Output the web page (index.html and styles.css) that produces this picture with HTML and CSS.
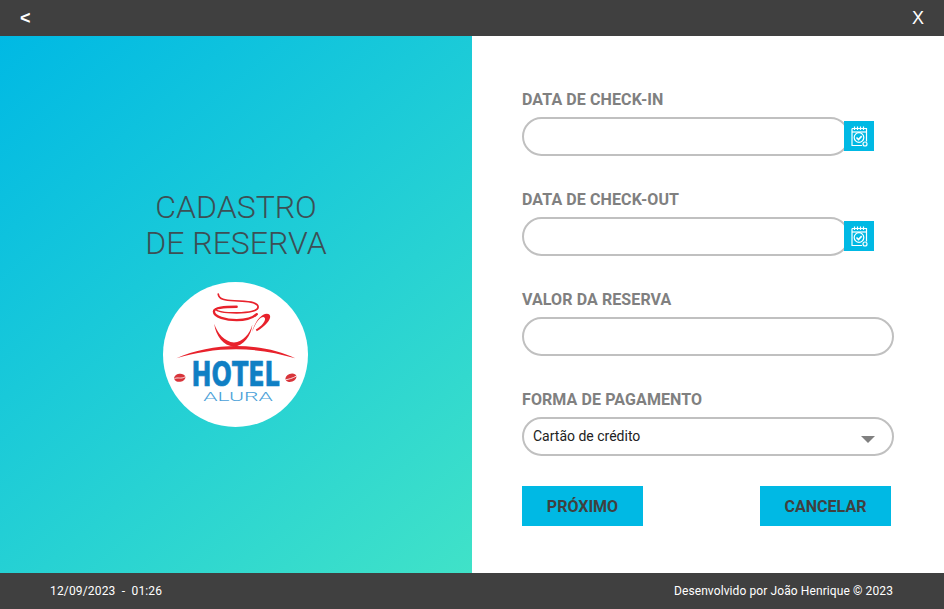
FILE: index.html
```html
<!DOCTYPE html>
<html>
<head>
	<meta charset="UTF-8">
	<title>Cadastro de Reserva</title>
	<link rel="stylesheet" href="styles.css">
</head>

<body>
<svg class="defs">
	<symbol id="calendar" viewBox="0 0 30 30">
		<g fill="none" stroke="#fff" stroke-width="1.200">
			<path d="M8 7.500h14.500v13M8 7.500v17h10"/>
			<path d="M10.500 5.500v3.500M13.500 5.500v3.500M16.500 5.500v3.500M19.500 5.500v3.500"/>
			<path d="M8 11h14.500"/>
			<circle cx="15" cy="16.500" r="4.800"/>
			<path d="M12.500 16.500l2 2l3.200-3.400" stroke-width="1.600"/>
			<circle cx="21" cy="23" r="2"/>
		</g>
	</symbol>
</svg>

<header class="topbar">
	<span class="back">&lt;</span>
	<span class="close">X</span>
</header>

<main class="content">
	<section class="side">
		<h1 class="title">CADASTRO<br>DE RESERVA</h1>
		<svg class="logo" viewBox="40 37 433 433">
			<circle cx="256.500" cy="253.500" r="216.500" fill="#fff"/>
			<g fill="none" stroke="#e8222c" stroke-linecap="round">
				<path d="M205 73c2 16 20 19 48 20c40 1 70 4 71 18c1 12-26 18-64 18c-34 0-60-4-62-11" stroke-width="5"/>
				<path d="M260 111c-36 0-68 2-68 14c0 16 36 26 68 26c24 0 48-6 60-18" stroke-width="7"/>
			</g>
			<path d="M193 162c4 36 28 66 58 68c30-2 52-32 56-66c-8 28-28 52-55 54c-28-2-50-28-59-56z" fill="#e8222c"/>
			<path d="M306 186c8-28 26-54 44-54c18 0 14 26-30 52l-3-5c24-14 34-34 24-37c-12-2-26 20-35 44z" fill="#e8222c"/>
			<path d="M80 265c50-24 120-37 178-37c64 0 130 13 177 37c-56-17-116-27-177-27c-62 0-122 10-178 27z" fill="#e8222c"/>
			<g fill="#d8343a">
				<ellipse cx="90" cy="323" rx="17" ry="12" transform="rotate(-8 90 323)"/>
				<ellipse cx="422" cy="323" rx="17" ry="12" transform="rotate(-20 422 323)"/>
			</g>
			<g stroke="#fff" stroke-width="2.500" fill="none">
				<path d="M74 326c10-6 20 2 32-6"/>
				<path d="M406 329c10-2 20-4 32-11"/>
			</g>
			<text class="hotel" x="125" y="347" textLength="264" lengthAdjust="spacingAndGlyphs">HOTEL</text>
			<text class="alura" x="160" y="393" textLength="208" lengthAdjust="spacingAndGlyphs">ALURA</text>
		</svg>
	</section>

	<form class="form">
		<div class="field">
			<label class="label">DATA DE CHECK-IN</label>
			<div class="date-row">
				<div class="input input-date"></div>
				<span class="date-btn"><svg><use href="#calendar"/></svg></span>
			</div>
		</div>
		<div class="field">
			<label class="label">DATA DE CHECK-OUT</label>
			<div class="date-row">
				<div class="input input-date"></div>
				<span class="date-btn"><svg><use href="#calendar"/></svg></span>
			</div>
		</div>
		<div class="field">
			<label class="label">VALOR DA RESERVA</label>
			<div class="input"></div>
		</div>
		<div class="field">
			<label class="label">FORMA DE PAGAMENTO</label>
			<div class="input select">
				<span>Cartão de crédito</span>
				<i class="arrow"></i>
			</div>
		</div>
		<div class="buttons">
			<button type="button" class="btn btn-next">PRÓXIMO</button>
			<button type="button" class="btn btn-cancel">CANCELAR</button>
		</div>
	</form>
</main>

<footer class="footer">
	<span class="clock">12/09/2023  -  01:26</span>
	<span>Desenvolvido por João Henrique © 2023</span>
</footer>
</body>
</html>
```

FILE: styles.css
```css
* {
	box-sizing: border-box;
}
html, body {
	margin: 0;
	height: 100%;
}
body {
	display: flex;
	flex-direction: column;
	height: 609px;
	overflow: hidden;
	font-family: Roboto, "Liberation Sans", sans-serif;
	background-color: #fff;
}
.defs {
	display: none;
}

.topbar {
	display: flex;
	justify-content: space-between;
	align-items: center;
	flex: 0 0 36px;
	padding: 0 20px;
	background-color: #404040;
	color: #fff;
	font-size: 18px;
}
.back {
	font-family: "Liberation Sans", sans-serif;
	font-weight: bold;
}
.close {
	font-family: "Liberation Sans", sans-serif;
}

.content {
	display: flex;
	flex: 1;
}
.side {
	display: flex;
	flex-direction: column;
	align-items: center;
	width: 472px;
	padding-top: 153px;
	background: linear-gradient(140deg, #00b9e4 0%, #40e2c8 100%);
}
.title {
	margin: 0;
	font-size: 32px;
	font-weight: 300;
	line-height: 36px;
	text-align: center;
	color: #3c4f55;
}
.logo {
	width: 145px;
	height: 145px;
	margin-top: 21px;
	margin-right: 1px;
	overflow: visible;
}
.hotel {
	font-family: "DejaVu Sans", sans-serif;
	font-weight: bold;
	font-size: 100px;
	fill: #0f7fc4;
	stroke: #0f7fc4;
	stroke-width: 2;
}
.alura {
	font-family: Roboto, sans-serif;
	font-size: 38px;
	font-weight: 300;
	fill: #4a9fd8;
}

.form {
	flex: 1;
	padding: 54px 50px 0;
}
.field {
	height: 100px;
}
.field:last-of-type {
	height: 99px;
}
.label {
	display: block;
	height: 27px;
	font-size: 16px;
	font-weight: bold;
	letter-spacing: .1px;
	line-height: 19px;
	color: #808080;
}
.input {
	width: 372px;
	height: 39px;
	border: 2px solid #c0c0c0;
	border-radius: 20px;
	background-color: #fff;
}
.date-row {
	display: flex;
	align-items: flex-start;
}
.input-date {
	width: 328px;
}
.date-btn {
	display: block;
	width: 30px;
	height: 30px;
	margin: 4px 0 0 -6px;
	background-color: #00b9e4;
}
.date-btn svg {
	display: block;
	width: 30px;
	height: 30px;
}
.select {
	display: flex;
	justify-content: space-between;
	align-items: center;
	padding: 0 17px 0 9px;
	font-size: 14px;
	color: #222;
}
.select span {
	margin-top: -2px;
}
.arrow {
	width: 0;
	height: 0;
	margin-top: 5px;
	border-top: 7px solid #808080;
	border-left: 7px solid transparent;
	border-right: 7px solid transparent;
}

.buttons {
	display: flex;
	justify-content: space-between;
	width: 369px;
	margin-top: -4px;
}
.btn {
	height: 40px;
	padding: 0;
	border: 0;
	background-color: #00b9e4;
	color: #404040;
	font-family: Roboto, "Liberation Sans", sans-serif;
	font-size: 16px;
	font-weight: bold;
}
.btn-next {
	width: 121px;
}
.btn-cancel {
	width: 131px;
}

.footer {
	display: flex;
	justify-content: space-between;
	align-items: center;
	flex: 0 0 36px;
	padding: 0 51px 0 50px;
	background-color: #404040;
	color: #fff;
	font-size: 12px;
	letter-spacing: .1px;
}
.clock {
	letter-spacing: .16px;
	white-space: pre;
}
```
